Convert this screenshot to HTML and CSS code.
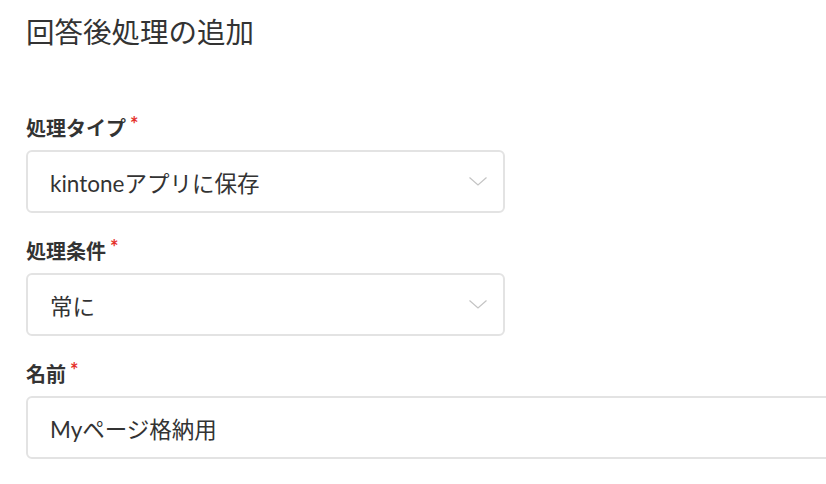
FILE: index.html
```html
<!DOCTYPE html>
<html lang="ja">
  <head>
    <meta charset="UTF-8" />
    <meta name="viewport" content="width=device-width, initial-scale=1.0" />
    <title>回答後処理の追加</title>
    <link rel="stylesheet" href="styles.css">
  </head>
  <body>
    <main class="page">
      <h1 class="page-title">回答後処理の追加</h1>

      <form class="action-form">
        <div class="field">
          <label class="field-label">処理タイプ<span class="required">*</span></label>
          <div class="select-box">
            <span class="select-value">kintoneアプリに保存</span>
            <svg class="chevron" width="18" height="9" viewBox="0 0 18 9">
              <polyline points="0.5,0.5 9,8 17.5,0.5" fill="none" stroke="#c4c4c4" stroke-width="1.2" />
            </svg>
          </div>
        </div>

        <div class="field">
          <label class="field-label">処理条件<span class="required">*</span></label>
          <div class="select-box">
            <span class="select-value">常に</span>
            <svg class="chevron" width="18" height="9" viewBox="0 0 18 9">
              <polyline points="0.5,0.5 9,8 17.5,0.5" fill="none" stroke="#c4c4c4" stroke-width="1.2" />
            </svg>
          </div>
        </div>

        <div class="field">
          <label class="field-label">名前<span class="required">*</span></label>
          <div class="text-box">Myページ格納用</div>
        </div>
      </form>
    </main>
  </body>
</html>
```

FILE: styles.css
```css
body {
  font-family: "Lato", "Noto Sans CJK JP", sans-serif;
  margin: 0;
  padding: 0;
  background-color: #fff;
  color: #333;
  overflow: hidden;
}

.page {
  padding: 14px 0 0 26px;
}

/* Title */
.page-title {
  margin: 0 0 64px;
  font-size: 28.5px;
  line-height: 36px;
  font-weight: 400;
  color: #333;
}

/* Fields */
.field {
  margin-bottom: 24px;
}

.field-label {
  display: block;
  margin-bottom: 8px;
  font-size: 20px;
  line-height: 28px;
  font-weight: 700;
  color: #333;
}

.required {
  display: inline-block;
  vertical-align: top;
  margin-left: 4px;
  font-size: 20px;
  line-height: 20px;
  font-weight: 700;
  color: #e5302a;
}

.select-box,
.text-box {
  box-sizing: border-box;
  height: 63px;
  border: 2px solid #e3e3e3;
  border-radius: 6px;
  padding: 0 16px 0 22px;
  font-size: 22.5px;
  display: flex;
  align-items: center;
}

.select-box {
  width: 479px;
  justify-content: space-between;
}

.text-box {
  width: 840px;
}

.chevron {
  display: block;
}
```
